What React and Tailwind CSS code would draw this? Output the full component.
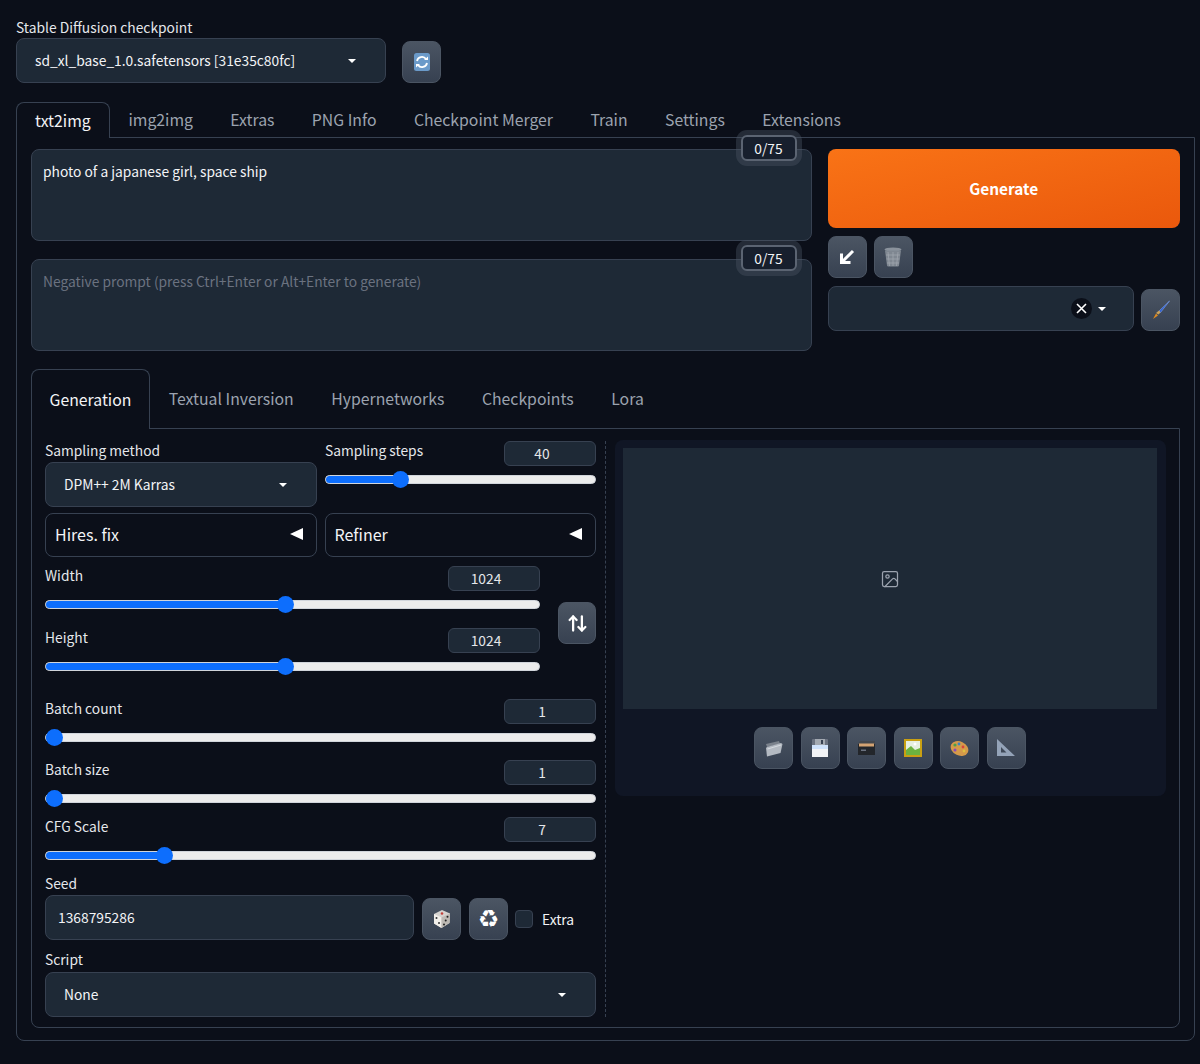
import React from "react";
import { ArrowUpDown, Image as ImageIcon } from "lucide-react";

const font = { fontFamily: '"Noto Sans CJK JP", "Noto Sans", sans-serif' };

function Caret() {
  return <span className="inline-block w-0 h-0 border-l-[4px] border-r-[4px] border-t-[4px] border-l-transparent border-r-transparent border-t-white" />;
}

function IconBtn({ children, className = "w-[39px]" }) {
  return (
    <button className={"h-[42px] shrink-0 rounded-[8px] flex items-center justify-center border border-[#4b5563] bg-gradient-to-b from-[#4b5563] to-[#374151] " + className}>
      {children}
    </button>
  );
}

function Select({ children, className = "" }) {
  return (
    <div className={"h-[45px] flex items-center justify-between pl-[18px] pr-[29px] rounded-[8px] border border-[#374151] bg-[#1e2936] text-[13.8px] text-[#f3f4f6] " + className}>
      <span>{children}</span>
      <Caret />
    </div>
  );
}

function NumBox({ v }) {
  return <div className="w-[92px] h-[25px] pr-[16px] rounded-[6px] border border-[#374151] bg-[#1e2936] flex items-center justify-center text-[13.8px] text-[#e5e7eb]">{v}</div>;
}

function Track({ pct }) {
  return (
    <div className="relative h-[9px] rounded-full bg-[#ececec] border border-[#d1d5db]">
      <div className="relative h-full rounded-full bg-[#0d6efd]" style={{ width: pct + "%" }}>
        <span className="absolute right-[-8px] top-[-5px] w-[17px] h-[17px] rounded-full bg-[#0d6efd]" />
      </div>
    </div>
  );
}

function Slider({ label, v, pct, className = "" }) {
  return (
    <div className={className}>
      <div className="flex justify-between h-[25px]">
        <span className="text-[13.8px] text-[#e5e7eb] leading-[19px]">{label}</span>
        <NumBox v={v} />
      </div>
      <div className="mt-[8.500px]"><Track pct={pct} /></div>
    </div>
  );
}

function Accordion({ label }) {
  return (
    <div className="flex-1 h-[44px] rounded-[8px] border border-[#374151] flex items-center justify-between pl-[9px] pr-[13px] pb-[2px] text-[16px] text-[#f3f4f6]">
      <span>{label}</span>
      <span className="w-0 h-0 border-t-[6.500px] border-b-[6.500px] border-r-[13px] border-t-transparent border-b-transparent border-r-white" />
    </div>
  );
}

function Counter() {
  return (
    <div className="absolute right-[14px] top-[-15px] w-[56px] h-[26px] rounded-[6px] border-2 border-[#5b6472] bg-[#171f2d] ring-[5px] ring-[#4b5563]/40 flex items-center justify-center text-[13.8px] text-[#f3f4f6]">
      0/75
    </div>
  );
}

function Prompt({ text, placeholder, className = "" }) {
  return (
    <div className={"relative h-[92px] rounded-[8px] border border-[#374151] bg-[#1e2936] pl-[11px] pt-[11px] text-[13.8px] leading-[21px] " + className}>
      {text ? <span className="text-[#f3f4f6]">{text}</span> : <span className="text-[#6b7280]">{placeholder}</span>}
      <Counter />
    </div>
  );
}

const RefreshIcon = () => (
  <svg width="16" height="18" viewBox="0 0 16 18">
    <rect width="16" height="18" rx="2.500" fill="#6b9ac9" />
    <path d="M3 8a5 5 0 0 1 9-2" fill="none" stroke="#fff" strokeWidth="1.800" />
    <path d="M13 10a5 5 0 0 1-9 2" fill="none" stroke="#fff" strokeWidth="1.800" />
    <path d="M10 7h4V3.500z M6 11H2v3.500z" fill="#fff" />
  </svg>
);
const ArrowIcon = () => (
  <svg width="18" height="18" viewBox="0 0 18 18" fill="none" stroke="#fff" strokeWidth="3">
    <path d="M15 3 4 14" />
    <path d="M3.500 5.500v9h9" />
  </svg>
);
const TrashIcon = () => (
  <svg width="18" height="20" viewBox="0 0 18 20">
    <ellipse cx="9" cy="2.500" rx="8.500" ry="2" fill="#8a929c" />
    <path d="M1 3.500h16l-2 15a1.500 1 0 0 1-1.500 1h-9a1.500 1 0 0 1-1.500-1z" fill="#7f8791" />
    <path d="M4 5l1.500 14M9 5v14M14 5l-1.500 14M2 8h14M2.500 12h13M3 16h12" stroke="#a3a9b1" strokeWidth=".7" />
  </svg>
);
const BrushIcon = () => (
  <svg width="20" height="20" viewBox="0 0 20 20">
    <path d="M18.500 1 8 11l1.500 1.500z" fill="#2f5fd0" stroke="#7ea3ee" strokeWidth=".6" />
    <path d="M8 10.500 5 13l2.500 1.500 2-2z" fill="#c9a15a" />
    <path d="M5 13.500 2 19l5-3.500z" fill="#e08a1e" />
  </svg>
);
const FolderIcon = () => (
  <svg width="18" height="17" viewBox="0 0 18 17">
    <path d="M1 4 14 1l1 3-13 3z" fill="#7b828c" />
    <path d="M2 7 16 3l1.500 1-2 9L2 16.500 1 8z" fill="#b4bac2" />
    <path d="M2.500 9 16 5" stroke="#dfe3e8" strokeWidth=".8" />
  </svg>
);
const SaveIcon = () => (
  <svg width="16" height="18" viewBox="0 0 16 18">
    <rect x="0" y="0" width="16" height="7" rx="1" fill="#6b7280" />
    <rect x="3" y="0" width="10" height="6" fill="#a3a9b1" />
    <rect x="9" y="1" width="2" height="4" fill="#374151" />
    <rect x="0" y="6" width="16" height="4" fill="#cfe2fb" />
    <rect x="0" y="10" width="16" height="8" fill="#f3f4f6" />
  </svg>
);
const BoxIcon = () => (
  <svg width="17" height="14" viewBox="0 0 17 14">
    <rect x="0" y="3" width="17" height="11" fill="#23262b" />
    <path d="M0 3 2 0h15v3z" fill="#43474d" />
    <rect x="1" y="2.500" width="15" height="3" fill="#d4a373" />
    <rect x="3" y="8.500" width="5" height="1.500" fill="#6b7280" />
  </svg>
);
const FrameIcon = () => (
  <svg width="18" height="18" viewBox="0 0 18 18">
    <rect width="18" height="18" fill="#c9a013" />
    <rect x="2" y="2" width="14" height="14" fill="#e6efe0" />
    <path d="M2 11 7 7l4 4 5-2v7H2z" fill="#6cb33f" />
    <circle cx="11" cy="5" r="1.500" fill="#fff" />
  </svg>
);
const PaletteIcon = () => (
  <svg width="19" height="17" viewBox="0 0 19 17">
    <ellipse cx="9.500" cy="8.500" rx="9.200" ry="7" transform="rotate(25 9.500 8.500)" fill="#d59a4a" />
    <circle cx="5" cy="5" r="1.600" fill="#4ea24a" />
    <circle cx="9" cy="4" r="1.400" fill="#3b82c4" />
    <circle cx="13" cy="7" r="1.400" fill="#d9453d" />
    <circle cx="5" cy="10" r="1.500" fill="#8b4ab8" />
    <circle cx="14" cy="11" r="1.400" fill="#e0c040" />
  </svg>
);
const RulerIcon = () => (
  <svg width="18" height="18" viewBox="0 0 18 18">
    <path fillRule="evenodd" d="M0 0 18 17H0zM4 8v5.500h5.500z" fill="#94a3b8" />
  </svg>
);
const DiceIcon = () => (
  <svg width="18" height="18" viewBox="0 0 18 18">
    <path d="M9 0 17 3.500 16.500 13 8.500 18 1 13.500 1 4z" fill="#d6d3cf" />
    <path d="M1 4 8.500 7.500V18L1 13.500z" fill="#f2efea" />
    <path d="M8.500 7.500 17 3.500 16.500 13 8.500 18z" fill="#bdb9b3" />
    <circle cx="9" cy="3.500" r="1.300" fill="#c2413a" />
    <circle cx="3.500" cy="8" r="1" fill="#333" /><circle cx="6" cy="13" r="1" fill="#333" />
    <circle cx="11" cy="14.500" r="1" fill="#222" /><circle cx="12.700" cy="10.500" r="1" fill="#222" /><circle cx="14.500" cy="6.800" r="1" fill="#222" />
  </svg>
);

const mainTabs = ["img2img", "Extras", "PNG Info", "Checkpoint Merger", "Train", "Settings", "Extensions"];
const subTabs = ["Textual Inversion", "Hypernetworks", "Checkpoints", "Lora"];

export default function App() {
  return (
    <div className="min-h-[1064px] w-[1200px] bg-[#0b0f19] pl-[16px] pr-[5px] pt-[17px] overflow-hidden" style={font}>
      <div className="text-[13.8px] leading-[20px] h-[21px] text-[#e5e7eb]">Stable Diffusion checkpoint</div>
      <div className="flex items-end gap-[16px]">
        <Select className="w-[370px]">sd_xl_base_1.0.safetensors [31e35c80fc]</Select>
        <IconBtn><RefreshIcon /></IconBtn>
      </div>

      <div className="flex h-[36px] mt-[19px] relative z-10">
        <div className="h-[36px] px-[18px] flex items-center rounded-t-[8px] border border-b-0 border-[#374151] bg-[#0b0f19] text-[15.800px] text-[#f3f4f6]">txt2img</div>
        {mainTabs.map((t) => (
          <div key={t} className="h-[36px] px-[18.700px] flex items-center text-[15.800px] text-[#9ca3af]">{t}</div>
        ))}
      </div>

      <div className="mt-[-1px] h-[904px] rounded-b-[8px] border border-[#374151] pl-[14px] pr-[14px] pt-[11px]">
        <div className="flex gap-[16px]">
          <div className="w-[781.500px]">
            <Prompt text="photo of a japanese girl, space ship" />
            <Prompt placeholder="Negative prompt (press Ctrl+Enter or Alt+Enter to generate)" className="mt-[18px]" />
          </div>
          <div className="w-[352.500px]">
            <button className="w-full h-[79px] rounded-[8px] bg-gradient-to-br from-[#f97316] to-[#ea580c] text-white font-bold text-[15.400px]">Generate</button>
            <div className="flex gap-[7px] mt-[8px]">
              <IconBtn><ArrowIcon /></IconBtn>
              <IconBtn><TrashIcon /></IconBtn>
            </div>
            <div className="flex items-end gap-[7.500px] mt-[8px]">
              <div className="w-[306px] h-[45px] rounded-[8px] border border-[#374151] bg-[#1e2936] flex items-center justify-end pr-[27px] gap-[6px]">
                <span className="w-[21px] h-[21px] rounded-full bg-[#0b0f19] flex items-center justify-center">
                  <svg width="11" height="11" viewBox="0 0 11 11" stroke="#fff" strokeWidth="1.600"><path d="M1 1l9 9M10 1l-9 9" /></svg>
                </span>
                <Caret />
              </div>
              <IconBtn><BrushIcon /></IconBtn>
            </div>
          </div>
        </div>

        <div className="flex h-[60px] mt-[18px] relative z-10">
          <div className="h-[60px] px-[17.500px] flex items-center rounded-t-[8px] border border-b-0 border-[#374151] bg-[#0b0f19] text-[15.800px] text-[#f3f4f6]">Generation</div>
          {subTabs.map((t) => (
            <div key={t} className="h-[60px] px-[18.800px] flex items-center text-[15.800px] text-[#9ca3af]">{t}</div>
          ))}
        </div>

        <div className="mt-[-1px] h-[600px] rounded-b-[8px] border border-[#374151] pl-[13px] pr-[13px] pt-[12px] flex">
          <div className="w-[551px] shrink-0">
            <div className="flex gap-[8px]">
              <div className="w-[272px]">
                <div className="h-[21px] text-[13.800px] leading-[18px] text-[#e5e7eb]">Sampling method</div>
                <Select>DPM++ 2M Karras</Select>
              </div>
              <div className="flex-1"><Slider label="Sampling steps" v="40" pct={27.800} /></div>
            </div>
            <div className="flex gap-[8px] mt-[6px]">
              <Accordion label="Hires. fix" />
              <Accordion label="Refiner" />
            </div>
            <div className="flex gap-[18px] mt-[9px]">
              <div className="w-[495px]">
                <Slider label="Width" v="1024" pct={48.700} />
                <Slider label="Height" v="1024" pct={48.700} className="mt-[19.500px]" />
              </div>
              <IconBtn className="mt-[36px] w-[38px]"><ArrowUpDown size={21} color="#fff" strokeWidth={2.600} /></IconBtn>
            </div>
            <Slider label="Batch count" v="1" pct={1.600} className="mt-[28.500px]" />
            <Slider label="Batch size" v="1" pct={1.600} className="mt-[18.500px]" />
            <Slider label="CFG Scale" v="7" pct={21.700} className="mt-[14.500px]" />

            <div className="mt-[14.500px] h-[21px] text-[13.800px] leading-[18px] text-[#e5e7eb]">Seed</div>
            <div className="flex items-end">
              <div className="w-[369px] h-[45px] rounded-[8px] border border-[#374151] bg-[#1e2936] pl-[12px] flex items-center text-[13.800px] text-[#f3f4f6]">1368795286</div>
              <IconBtn className="ml-[8px] w-[39px]"><DiceIcon /></IconBtn>
              <IconBtn className="ml-[8px] w-[39px]"><span className="text-white text-[24px] leading-none font-['DejaVu_Sans']">♻</span></IconBtn>
              <span className="ml-[7px] mb-[12px] w-[18px] h-[18px] rounded-[4px] border border-[#374151] bg-[#1e2936]" />
              <span className="ml-[9px] mb-[11px] text-[13.800px] leading-[20px] text-[#f3f4f6]">Extra</span>
            </div>

            <div className="mt-[10px] h-[22px] text-[13.800px] leading-[19px] text-[#e5e7eb]">Script</div>
            <Select>None</Select>
          </div>

          <div className="ml-[9px] mb-[10px] w-0 border-l border-dashed border-[#374151]" />

          <div className="ml-[9px] mt-[-1px] w-[551px] h-[356px] rounded-[8px] bg-[#101625] pl-[8px] pr-[9px] pt-[8px]">
            <div className="h-[261px] bg-[#1e2936] flex items-center justify-center">
              <ImageIcon size={20} color="#9ca3af" strokeWidth={1.500} />
            </div>
            <div className="flex justify-center gap-[7.500px] mt-[18px]">
              <IconBtn><FolderIcon /></IconBtn>
              <IconBtn><SaveIcon /></IconBtn>
              <IconBtn><BoxIcon /></IconBtn>
              <IconBtn><FrameIcon /></IconBtn>
              <IconBtn><PaletteIcon /></IconBtn>
              <IconBtn><RulerIcon /></IconBtn>
            </div>
          </div>
        </div>
      </div>
    </div>
  );
}
